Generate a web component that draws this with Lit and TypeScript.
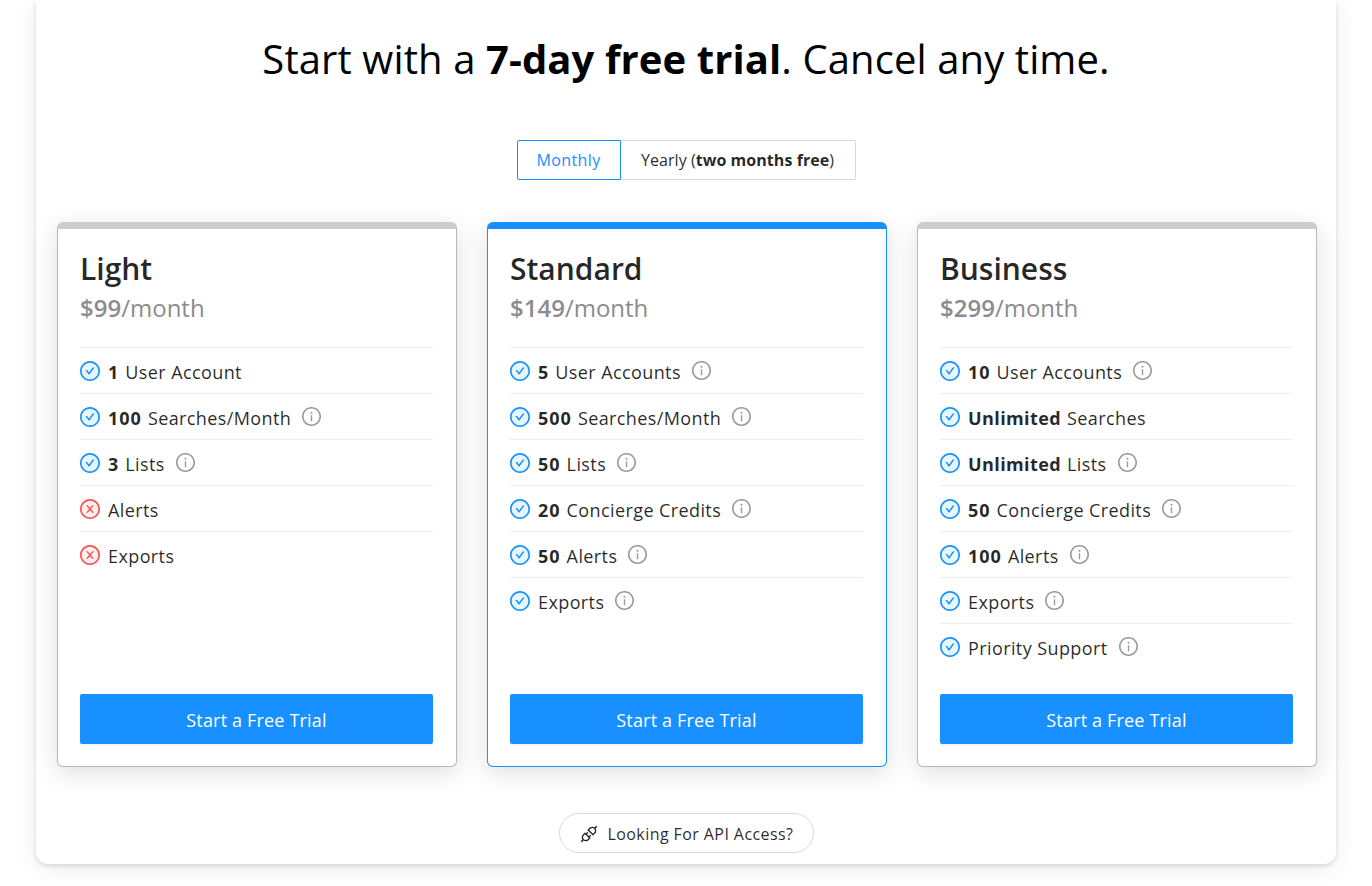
import { LitElement, html, css, svg } from "lit";
import { customElement } from "lit/decorators.js";

const RING = "M512 64C264.6 64 64 264.6 64 512s200.6 448 448 448 448-200.6 448-448S759.4 64 512 64zm0 820c-205.4 0-372-166.6-372-372s166.6-372 372-372 372 166.6 372 372-166.6 372-372 372z";
const CHECK = "M699 353h-46.9c-10.2 0-19.9 4.9-25.9 13.3L469 584.3l-71.2-98.8c-6-8.3-15.6-13.3-25.9-13.3H325c-6.5 0-10.3 7.4-6.5 12.7l124.6 172.8a31.8 31.8 0 0051.7 0l210.6-292c3.9-5.3.1-12.7-6.4-12.7z";
const CROSS = "M685.4 354.8c0-4.4-3.6-8-8-8l-66 .3L512 465.6l-99.3-118.4-66.1-.3c-4.4 0-8 3.5-8 8 0 1.9.7 3.7 1.9 5.2l130.1 155L340.5 670a8.32 8.32 0 00-1.9 5.2c0 4.4 3.6 8 8 8l66.1-.3L512 564.4l99.3 118.4 66 .3c4.4 0 8-3.5 8-8 0-1.9-.7-3.7-1.9-5.2L553.5 515l130.1-155c1.2-1.4 1.8-3.3 1.8-5.2z";
const INFO = "M464 336a48 48 0 1096 0 48 48 0 10-96 0zm72 112h-48c-4.4 0-8 3.6-8 8v272c0 4.4 3.6 8 8 8h48c4.4 0 8-3.6 8-8V456c0-4.4-3.6-8-8-8z";
const API = "M917.7 148.8l-42.4-42.4c-1.6-1.6-3.6-2.3-5.7-2.3s-4.1.8-5.7 2.3l-76.1 76.1a199.27 199.27 0 00-112.1-34.3c-51.2 0-102.4 19.5-141.5 58.6L432.3 308.7a8.03 8.03 0 000 11.3L704 591.7c1.6 1.6 3.6 2.3 5.7 2.3 2 0 4.1-.8 5.7-2.3l101.9-101.9c68.9-69 77-175.7 24.3-253.5l76.1-76.1c3.1-3.2 3.1-8.3 0-11.4zM769.1 441.7l-59.4 59.4-186.8-186.8 59.4-59.4c24.9-24.9 58.1-38.7 93.4-38.7 35.3 0 68.4 13.7 93.4 38.7 24.9 24.9 38.7 58.1 38.7 93.4 0 35.3-13.8 68.4-38.7 93.4zm-190.2 105a8.03 8.03 0 00-11.3 0L501 613.3 410.7 523l66.7-66.7c3.1-3.1 3.1-8.2 0-11.3L441 408.6a8.03 8.03 0 00-11.3 0L363 475.3l-43-43a7.85 7.85 0 00-5.7-2.3c-2 0-4.1.8-5.7 2.3L206.8 534.2c-68.9 69-77 175.7-24.3 253.5l-76.1 76.1a8.03 8.03 0 000 11.3l42.4 42.4c1.6 1.6 3.6 2.3 5.7 2.3s4.1-.8 5.7-2.3l76.1-76.1c33.7 22.9 72.9 34.3 112.1 34.3 51.2 0 102.4-19.5 141.5-58.6l101.9-101.9c3.1-3.1 3.1-8.2 0-11.3l-43-43 66.7-66.7c3.1-3.1 3.1-8.2 0-11.3l-36.6-36.2zM441.7 769.1a131.32 131.32 0 01-93.4 38.7c-35.3 0-68.4-13.7-93.4-38.7a131.32 131.32 0 01-38.7-93.4c0-35.3 13.7-68.4 38.7-93.4l59.4-59.4 186.8 186.8-59.4 59.4z";

const icon = (cls: string, ...paths: string[]) => html`<svg class=${cls} viewBox="64 64 896 896" fill="currentColor" aria-hidden="true">${paths.map((d) => svg`<path d=${d}></path>`)}</svg>`;
const status = (no?: boolean) => html`<svg class="st ${no ? "no" : "ok"}" viewBox="64 64 896 896" fill="currentColor" aria-hidden="true">
  <circle class="tint" cx="512" cy="512" r="380"></circle>
  <path d=${RING}></path><path d=${no ? CROSS : CHECK}></path>
</svg>`;

type Row = { b?: string; t?: string; info?: boolean; no?: boolean };
type Plan = { name: string; price: string; featured?: boolean; rows: Row[] };

const plans: Plan[] = [
  { name: "Light", price: "$99", rows: [
    { b: "1", t: "User Account" },
    { b: "100", t: "Searches/Month", info: true },
    { b: "3", t: "Lists", info: true },
    { t: "Alerts", no: true },
    { t: "Exports", no: true },
  ] },
  { name: "Standard", price: "$149", featured: true, rows: [
    { b: "5", t: "User Accounts", info: true },
    { b: "500", t: "Searches/Month", info: true },
    { b: "50", t: "Lists", info: true },
    { b: "20", t: "Concierge Credits", info: true },
    { b: "50", t: "Alerts", info: true },
    { t: "Exports", info: true },
  ] },
  { name: "Business", price: "$299", rows: [
    { b: "10", t: "User Accounts", info: true },
    { b: "Unlimited", t: "Searches" },
    { b: "Unlimited", t: "Lists", info: true },
    { b: "50", t: "Concierge Credits", info: true },
    { b: "100", t: "Alerts", info: true },
    { t: "Exports", info: true },
    { t: "Priority Support", info: true },
  ] },
];

@customElement("app-root")
export class AppRoot extends LitElement {
  static styles = css`
    :host { display: block; height: 886px; overflow: hidden; background: #fff; font-family: "Open Sans", "Noto Sans", sans-serif; color: rgba(0,0,0,.85); }
    * { box-sizing: border-box; }
    .panel { margin: 0 36px; height: 864px; background: #fff; border-radius: 0 0 12px 12px; box-shadow: 0 2px 4px rgba(0,0,0,.12), 0 4px 24px rgba(0,0,0,.08); padding: 0 21px; display: flex; flex-direction: column; align-items: center; }
    h1 { margin: 0; height: 118px; line-height: 118px; font-size: 40px; font-weight: 400; color: #000; letter-spacing: .1px; white-space: nowrap; }
    h1 b { font-weight: 700; }
    .toggle { margin-top: 22px; display: flex; height: 40px; font-size: 16px; line-height: 38px; }
    .toggle div { border: 1px solid #d9d9d9; background: #fff; white-space: nowrap; }
    .toggle .m { width: 104px; text-align: center; border-color: #1890ff; color: #1890ff; border-radius: 2px 0 0 2px; letter-spacing: .4px; }
    .toggle .y { width: 235px; text-align: center; border-left: 0; border-radius: 0 2px 2px 0; letter-spacing: .05px; }
    .cards { margin-top: 42px; width: 100%; display: grid; grid-template-columns: repeat(3, 400px); gap: 30px; }
    .card { height: 545px; border: 1px solid #b8b8b8; border-top: 7px solid #ccc; border-radius: 6px; background: #fff; padding: 20px 23px 22px 22px; display: flex; flex-direction: column; box-shadow: 0 6px 24px rgba(0,0,0,.13); }
    .card.f { border-color: #1890ff; }
    h2 { margin: 0; font-size: 30px; line-height: 40px; font-weight: 600; }
    .price { font-size: 24px; line-height: 38px; color: #8c8c8c; }
    .price b { font-weight: 600; }
    ul { list-style: none; margin: 20px 0 0; padding: 0; flex: 1; }
    li { height: 46px; border-top: 1px solid #eee; display: flex; align-items: center; font-size: 18px; letter-spacing: .4px; white-space: nowrap; }
    li b, li span { padding-top: 2px; }
    li b { font-weight: 700; margin-right: 6px; }
    li b.n { letter-spacing: 1px; margin-right: 6px; }
    .st { width: 20px; height: 20px; margin-right: 8px; flex: none; }
    .ok { color: #1890ff; }
    .ok .tint { fill: #e6f7ff; }
    .no { color: #ff4d4f; }
    .no .tint { fill: #fff1f0; }
    .inf { width: 19px; height: 19px; margin-left: 11px; color: #999; flex: none; }
    button { height: 50px; border: 0; border-radius: 2px; background: #1890ff; color: #fff; font: inherit; font-size: 18px; letter-spacing: .17px; box-shadow: 0 2px 0 rgba(0,0,0,.045); padding: 2px 0 0; }
    .pill { margin-top: 46px; width: 255px; height: 40px; border: 1px solid #d9d9d9; border-radius: 20px; background: #fff; display: flex; align-items: center; padding: 2px 0 0 20px; font-size: 16px; letter-spacing: .42px; white-space: nowrap; }
    .api { width: 18px; height: 18px; margin-right: 10px; flex: none; }
  `;

  render() {
    return html`<div class="panel">
      <h1>Start with a <b>7-day free trial</b>. Cancel any time.</h1>
      <div class="toggle"><div class="m">Monthly</div><div class="y">Yearly (<b>two months free</b>)</div></div>
      <div class="cards">
        ${plans.map((p) => html`<section class="card ${p.featured ? "f" : ""}">
          <h2>${p.name}</h2>
          <div class="price"><b>${p.price}</b>/month</div>
          <ul>
            ${p.rows.map((r) => html`<li>
              ${status(r.no)}
              ${r.b ? html`<b class=${/^\d/.test(r.b) ? "n" : ""}>${r.b}</b>` : ""}<span>${r.t}</span>
              ${r.info ? icon("inf", RING, INFO) : ""}
            </li>`)}
          </ul>
          <button>Start a Free Trial</button>
        </section>`)}
      </div>
      <div class="pill">${icon("api", API)}<span>Looking For API Access?</span></div>
    </div>`;
  }
}
